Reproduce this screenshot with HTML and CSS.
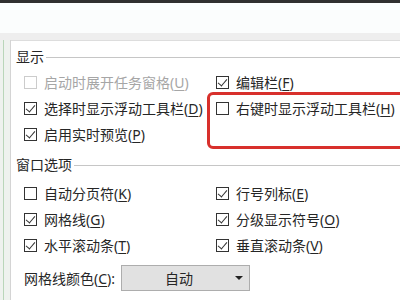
FILE: index.html
```html
<!DOCTYPE html>
<html lang="zh-CN">
  <head>
    <meta charset="UTF-8" />
    <meta name="viewport" content="width=device-width, initial-scale=1.0" />
    <title>Excel 选项 - 高级</title>
    <link rel="stylesheet" href="styles.css">
  </head>
  <body>
    <div class="page">
      <div class="title-bar"></div>
      <div class="ribbon"></div>
      <div class="gap-band"></div>

      <div class="main">
        <div class="side"><div class="side-line"></div></div>

        <div class="panel">
          <!-- 显示 -->
          <div class="group-title"><span>显示</span></div>
          <div class="options">
            <label class="option disabled">
              <span class="box"></span>
              <span>启动时展开任务窗格(<u>U</u>)</span>
            </label>
            <label class="option">
              <span class="box checked"></span>
              <span>编辑栏(<u>F</u>)</span>
            </label>
            <label class="option">
              <span class="box checked"></span>
              <span>选择时显示浮动工具栏(<u>D</u>)</span>
            </label>
            <label class="option">
              <span class="box"></span>
              <span>右键时显示浮动工具栏(<u>H</u>)</span>
            </label>
            <label class="option">
              <span class="box checked"></span>
              <span>启用实时预览(<u>P</u>)</span>
            </label>
          </div>

          <!-- 窗口选项 -->
          <div class="group-title second"><span>窗口选项</span></div>
          <div class="options">
            <label class="option">
              <span class="box"></span>
              <span>自动分页符(<u>K</u>)</span>
            </label>
            <label class="option">
              <span class="box checked"></span>
              <span>行号列标(<u>E</u>)</span>
            </label>
            <label class="option">
              <span class="box checked"></span>
              <span>网格线(<u>G</u>)</span>
            </label>
            <label class="option">
              <span class="box checked"></span>
              <span>分级显示符号(<u>O</u>)</span>
            </label>
            <label class="option">
              <span class="box checked"></span>
              <span>水平滚动条(<u>T</u>)</span>
            </label>
            <label class="option">
              <span class="box checked"></span>
              <span>垂直滚动条(<u>V</u>)</span>
            </label>
          </div>

          <div class="color-row">
            <span>网格线颜色(<u>C</u>):</span>
            <div class="select">
              <span class="select-value">自动</span>
              <span class="select-arrow"></span>
            </div>
          </div>
        </div>
      </div>

      <div class="highlight"></div>
    </div>
  </body>
</html>
```

FILE: styles.css
```css
* {
  margin: 0;
  padding: 0;
  box-sizing: border-box;
}

body {
  font-family: "Noto Sans", "Noto Sans CJK SC", sans-serif;
  font-size: 14px;
  color: #262626;
  background-color: #ffffff;
}

.page {
  position: relative;
  width: 400px;
  height: 300px;
  overflow: hidden;
}

.title-bar {
  height: 3px;
  background-color: #303030;
}

.ribbon {
  height: 30px;
  background-color: #fbfdfd;
}

.gap-band {
  height: 7px;
  background-color: #eeeeee;
}

.main {
  display: flex;
  height: 260px;
}

.side {
  width: 11px;
  background-color: #eef2ee;
  border-right: 1px solid #d4d4d4;
  padding-left: 3px;
}

.side-line {
  width: 1px;
  height: 100%;
  background-color: #b9d6b9;
}

.panel {
  flex: 1;
  background-color: #ffffff;
  border-top: 1px solid #dddddd;
  padding: 8px 0 0 5px;
}

.group-title {
  display: flex;
  align-items: center;
  height: 16px;
  line-height: 16px;
  gap: 2px;
}

.group-title::after {
  content: "";
  flex: 1;
  height: 1px;
  background-color: #c6c6c6;
}

.group-title.second {
  margin-top: 10px;
}

.options {
  display: grid;
  grid-template-columns: 192px 1fr;
  margin: 4px 0 0 8px;
}

.group-title.second + .options {
  margin-top: 7px;
}

.option {
  display: flex;
  align-items: center;
  gap: 7px;
  height: 26px;
  white-space: nowrap;
}

.option.disabled {
  color: #a6a6a6;
}

.box {
  position: relative;
  width: 13px;
  height: 13px;
  border: 1px solid #333333;
  background-color: #ffffff;
  flex-shrink: 0;
}

.option.disabled .box {
  border-color: #cccccc;
}

/* thin check mark */
.box.checked::after {
  content: "";
  position: absolute;
  left: 3px;
  top: 0px;
  width: 4px;
  height: 8px;
  border-right: 1px solid #333333;
  border-bottom: 1px solid #333333;
  transform: rotate(40deg);
}

u {
  text-decoration: underline;
  text-underline-offset: 2px;
}

.color-row {
  display: flex;
  align-items: center;
  gap: 6px;
  height: 26px;
  margin: 7px 0 0 8px;
}

.select {
  position: relative;
  width: 129px;
  height: 26px;
  background-color: #e1e1e1;
  border: 1px solid #adadad;
  display: flex;
  align-items: center;
  padding-left: 43px;
}

.select-arrow {
  position: absolute;
  right: 6px;
  top: 10px;
  width: 0;
  height: 0;
  border-left: 4px solid transparent;
  border-right: 4px solid transparent;
  border-top: 4px solid #222222;
}

/* red annotation frame */
.highlight {
  position: absolute;
  left: 207px;
  top: 92px;
  width: 220px;
  height: 57px;
  border: 3px solid #d8302c;
  border-radius: 6px;
}
```
